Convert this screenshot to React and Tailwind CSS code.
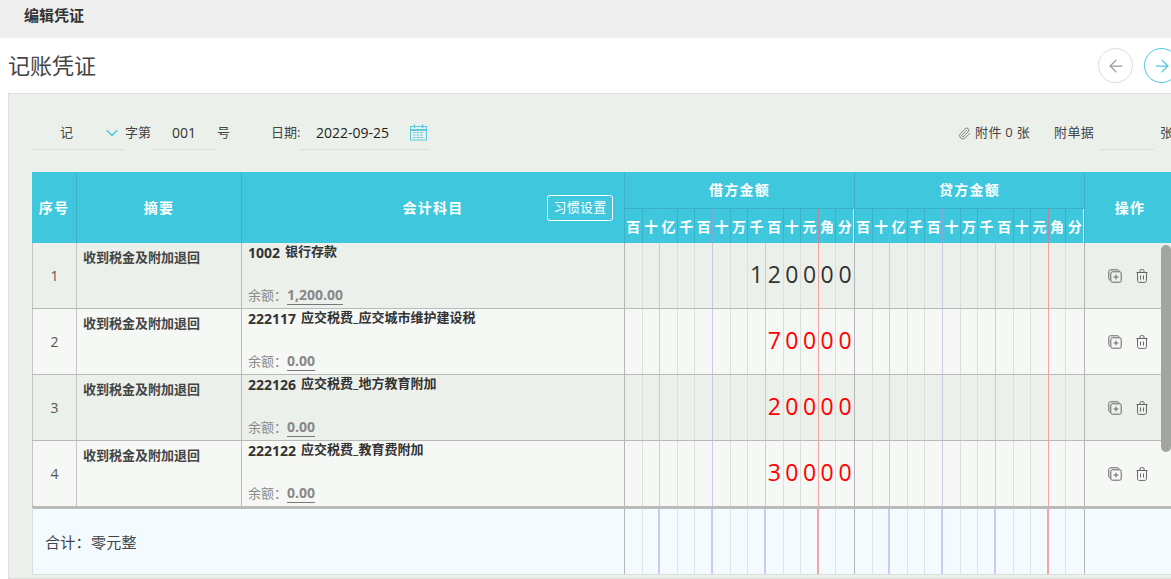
import { ArrowLeft, ArrowRight, ChevronDown, Paperclip } from "lucide-react";

const units = ["百", "十", "亿", "千", "百", "十", "万", "千", "百", "十", "元", "角", "分"];

const rows = [
  { no: 1, code: "1002", name: "银行存款", balance: "1,200.00", debit: "120000", red: false },
  { no: 2, code: "222117", name: "应交税费_应交城市维护建设税", balance: "0.00", debit: "70000", red: true },
  { no: 3, code: "222126", name: "应交税费_地方教育附加", balance: "0.00", debit: "20000", red: true },
  { no: 4, code: "222122", name: "应交税费_教育费附加", balance: "0.00", debit: "30000", red: true },
];

const head = "border-r-[#3ab1c6]";
const headP = "border-r-[#86a9dc]";
const headR = "border-r-[#b08d9c]";
const headLine = [head, headP, head, head, headP, head, head, headP, head, head, headR, head, ""];

const line = "border-r border-r-[#dcdedb]";
const lineP = "border-r border-r-[#cfc7ea]";
const lineR = "border-r border-r-[#f3a29c]";
const bodyLine = [line, lineP, line, line, lineP, line, line, lineP, line, line, lineR, line, ""];

const sum = "border-r border-r-[#dfe3e6]";
const sumP = "border-r-2 border-r-[#d0c8f4]";
const sumR = "border-r-2 border-r-[#f3a4a4]";
const totalLine = [sum, sumP, sum, sum, sumP, sum, sum, sumP, sum, sum, sumR, sum, ""];

function CopyIcon() {
  return (
    <svg width="14" height="14" viewBox="0 0 14 14" fill="none" stroke="#666" strokeWidth="1">
      <path d="M2.5 11.2 C1.4 11 .8 10.3 .8 9.3 V2.6 C.8 1.5 1.5 .8 2.6 .8 H9.3 C10.3 .8 11 1.4 11.2 2.5" />
      <rect x="2.8" y="2.8" width="10.4" height="10.4" rx="1.6" />
      <path d="M8 5.6 V10.4 M5.6 8 H10.4" />
    </svg>
  );
}

function TrashIcon() {
  return (
    <svg width="12" height="14" viewBox="0 0 12 14" fill="none" stroke="#666" strokeWidth="1">
      <path d="M.5 3.5 H11.5 M4 3.2 V1.8 C4 1 4.4 .6 5.2 .6 H6.8 C7.6 .6 8 1 8 1.8 V3.2" />
      <path d="M1.5 3.5 V11.6 C1.5 12.7 2.1 13.4 3.2 13.4 H8.8 C9.9 13.4 10.5 12.7 10.5 11.6 V3.5" />
      <path d="M4.5 6.5 V10.5 M7.5 6.5 V10.5" />
    </svg>
  );
}

function CalendarIcon() {
  return (
    <svg width="17" height="17" viewBox="0 0 17 17" fill="none" stroke="#5cc9de" strokeWidth="1">
      <rect x=".5" y="2.5" width="16" height="13.5" />
      <path d="M.5 6 H16.5" strokeWidth="2" />
      <path d="M4.5 .5 V4 M12.5 .5 V4" strokeWidth="1.5" />
      <path d="M3 8.5 H14 M3 11 H14 M3 13.5 H14" strokeDasharray="2.4 1.2" />
    </svg>
  );
}

function HeadDigits() {
  return (
    <div className="grid grid-cols-[repeat(13,1fr)] h-[35px] border-t border-[#3ab1c6]">
      {units.map((u, i) => (
        <div key={i} className={`flex items-center justify-center border-r text-[14px] font-bold tracking-normal text-white ${headLine[i]}`}>
          {u}
        </div>
      ))}
    </div>
  );
}

function DigitCells({ value, red, lines }) {
  const digits = value ? value.padStart(13, " ").split("") : units.map(() => " ");
  return (
    <div className="grid grid-cols-[repeat(13,1fr)] h-full border-r border-[#b5b5b5]">
      {digits.map((d, i) => (
        <div
          key={i}
          className={`flex items-center justify-center pb-[2px] text-[23px] font-normal ${red ? "text-[#ff0000]" : "text-[#333]"} ${lines[i]}`}
        >
          {d.trim()}
        </div>
      ))}
    </div>
  );
}

function VoucherRow({ row }) {
  const bg = row.no % 2 === 1 ? "bg-[#ecf0ea]" : "bg-[#f6f8f5]";
  return (
    <div className={`grid grid-cols-[45px_165px_383px_230px_230px_90px] h-[66px] border-b border-[#b9b9b9] ${bg}`}>
      <div className="flex items-center justify-center border-x border-[#c4c4c4] text-[14px] text-[#555]">{row.no}</div>
      <div className="border-r border-[#b9b9b9] pl-[6px] pt-[4px] text-[13px] leading-[20px] font-bold text-[#444]">
        收到税金及附加退回
      </div>
      <div className="flex flex-col justify-between border-r border-[#b5b5b5] pl-[6px] pr-2 pb-[3px] text-[13px]">
        <div className="flex items-center gap-[5px] h-[20px] -mt-[1px] font-bold text-[#333]">
          <span className="text-[14px]">{row.code}</span>
          <span>{row.name}</span>
        </div>
        <div className="flex items-center leading-[20px] text-[#888]">
          <span>余额：</span>
          <span className="border-b border-[#777] text-[14px] leading-[18px] font-bold">{row.balance}</span>
        </div>
      </div>
      <DigitCells value={row.debit} red={row.red} lines={bodyLine} />
      <DigitCells lines={bodyLine} />
      <div className="flex items-center gap-[14px] pl-[23px]">
        <CopyIcon />
        <TrashIcon />
      </div>
    </div>
  );
}

export default function App() {
  return (
    <div className="relative w-[1171px] h-[579px] overflow-hidden bg-white text-[#333] font-['Open_Sans','Noto_Sans_CJK_SC',sans-serif]">
      <div className="flex items-center h-[38px] pl-6 pb-[8px] bg-[#efefef] text-[15px] font-bold text-[#333]">编辑凭证</div>

      <div className="flex items-center justify-between h-[55px] pl-2 pb-[2px]">
        <div className="text-[22px] leading-none text-[#444]">记账凭证</div>
        <div className="flex gap-[11px] -mr-[8px] mt-[2px]">
          <button className="flex items-center justify-center w-[35px] h-[35px] rounded-full border border-[#ddd] text-[#999]">
            <ArrowLeft size={20} strokeWidth={1.5} />
          </button>
          <button className="flex items-center justify-center w-[35px] h-[35px] rounded-full border border-[#4cc9e0] text-[#4cc9e0]">
            <ArrowRight size={20} strokeWidth={1.5} />
          </button>
        </div>
      </div>

      <div className="ml-2 w-[1180px] h-[486px] border border-[#dcdedb] bg-[#ecf0ea]">
        <div className="flex items-start justify-between h-[78px] pt-[22px] pl-[22px] text-[13px] text-[#444] whitespace-nowrap">
          <div className="flex items-start">
            <div className="relative flex items-center w-[94px] h-[34px] border-b border-[#dcdedb] pl-[29px]">
              <span>记</span>
              <ChevronDown size={20} strokeWidth={1.4} className="absolute right-[3px] top-[7px] text-[#3ec7dd]" />
            </div>
            <div className="flex items-center h-[34px] w-[26px]">字第</div>
            <div className="flex items-center h-[34px] w-[66px] border-b border-[#dcdedb] pl-[21px] text-[14px] text-[#333]">001</div>
            <div className="flex items-center h-[34px] w-[54px]">号</div>
            <div className="flex items-center h-[34px] w-[29px]">日期:</div>
            <div className="flex items-center gap-[21px] h-[34px] w-[130px] border-b border-[#dcdedb] pl-[16px] text-[14px] text-[#222]">
              <span>2022-09-25</span>
              <CalendarIcon />
            </div>
          </div>
          <div className="flex items-start mr-[7px]">
            <div className="flex items-center gap-[4px] h-[34px]">
              <Paperclip size={13} strokeWidth={1.3} className="text-[#555]" />
              <span className="tracking-[0.3px]">附件 0 张</span>
            </div>
            <div className="flex items-center h-[34px] ml-6 tracking-[0.3px]">附单据</div>
            <div className="h-[34px] w-[55px] ml-[5px] border-b border-[#dcdedb]" />
            <div className="flex items-center h-[34px] w-[20px] ml-[6px]">张</div>
          </div>
        </div>

        <div className="ml-[23px] w-[1143px]">
          <div className="grid grid-cols-[45px_165px_383px_230px_230px_90px] h-[71px] bg-[#3ec7dd] text-[14px] font-bold text-white">
            <div className="flex items-center justify-center border-r border-[#3ab1c6] tracking-[1.3px] pb-[1px]">序号</div>
            <div className="flex items-center justify-center border-r border-[#3ab1c6] tracking-[1.3px] pb-[1px]">摘要</div>
            <div className="grid grid-cols-[1fr_auto_1fr] items-center border-r border-[#3ab1c6]">
              <span />
              <span className="tracking-[1.3px] pb-[1px]">会计科目</span>
              <button className="justify-self-end mr-[11px] w-[66px] h-[26px] rounded-[3px] border border-white text-[13px] font-normal tracking-[0.3px]">习惯设置</button>
            </div>
            <div className="border-r border-[#3ab1c6]">
              <div className="flex items-center justify-center h-[36px] pb-[2px] tracking-[1.3px]">借方金额</div>
              <HeadDigits />
            </div>
            <div className="border-r border-[#3ab1c6]">
              <div className="flex items-center justify-center h-[36px] pb-[2px] tracking-[1.3px]">贷方金额</div>
              <HeadDigits />
            </div>
            <div className="flex items-center justify-center tracking-[1.3px] pb-[1px]">操作</div>
          </div>

          {rows.map((row) => (
            <VoucherRow key={row.no} row={row} />
          ))}

          <div className="grid grid-cols-[592px_230px_230px_90px] h-[68px] border-t-2 border-b border-t-[#bbb] border-b-[#dcdedb] border-l border-l-[#dcdedb] bg-[#f3fbff]">
            <div className="flex items-center pl-3 pt-[2px] border-r border-[#b5b5b5] text-[15px] tracking-[0.3px] text-[#444]">合计：零元整</div>
            <DigitCells lines={totalLine} />
            <DigitCells lines={totalLine} />
            <div />
          </div>
        </div>
      </div>

      <div className="absolute left-[1161px] top-[245px] w-[10px] h-[207px] rounded-[5px] bg-[#a3a5a0]" />
    </div>
  );
}
